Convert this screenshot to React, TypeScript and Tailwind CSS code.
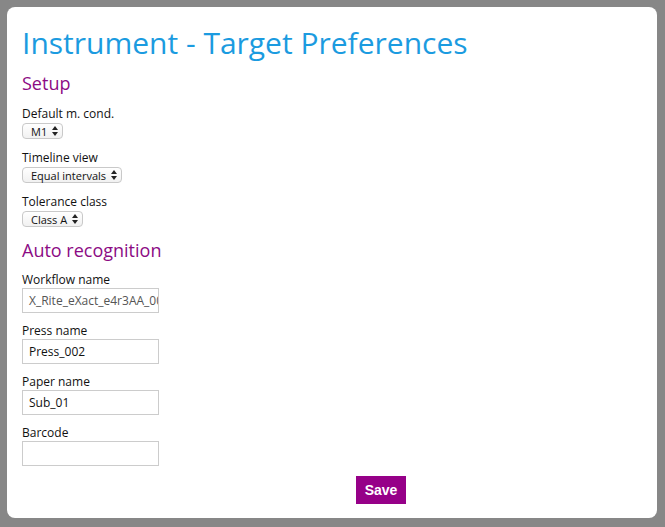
import React from "react";

const font = { fontFamily: '"Open Sans", "Noto Sans", sans-serif' };

function Arrows() {
  return (
    <svg width="6" height="10" viewBox="0 0 6 10" className="ml-[5px]">
      <path d="M0 4 L3 0 L6 4 Z" fill="#222" />
      <path d="M0 6 L3 10 L6 6 Z" fill="#222" />
    </svg>
  );
}

function FakeSelect({ value }: { value: string }) {
  return (
    <div className="mt-[1px] inline-flex h-[16px] items-center rounded-[4px] border border-[#c9c9c9] bg-gradient-to-b from-white to-[#f1f1f1] pl-[8px] pr-[4px] text-[11px] leading-none text-[#111]">
      {value}
      <Arrows />
    </div>
  );
}

function SelectField({ label, value }: { label: string; value: string }) {
  return (
    <div className="mb-[11px] flex flex-col items-start">
      <label className="text-[12px] leading-[16px] text-[#111]">{label}</label>
      <FakeSelect value={value} />
    </div>
  );
}

function TextField({ label, value, muted }: { label: string; value: string; muted?: boolean }) {
  return (
    <div className="mb-[10px] flex flex-col">
      <label className="text-[12px] leading-[16px] text-[#111]">{label}</label>
      <div
        className={`flex h-[25px] w-[137px] items-center overflow-hidden whitespace-nowrap border border-[#cccccc] bg-white pl-[6px] text-[12px] ${
          muted ? "text-[#555]" : "text-[#111]"
        }`}
      >
        {value}
      </div>
    </div>
  );
}

export default function App() {
  return (
    <div className="min-h-[527px] w-[665px] bg-[#878787] p-[7px]" style={font}>
      <div className="h-[511px] w-[650px] rounded-[8px] bg-white px-[15px] pt-[16px]">
        <h1 className="text-[30px] leading-[40px] text-[#1b9be0]">Instrument - Target Preferences</h1>
        <h2 className="mt-[8px] text-[18px] leading-[24px] text-[#8c0a84]">Setup</h2>
        <div className="mt-[11px]">
          <SelectField label="Default m. cond." value="M1" />
          <SelectField label="Timeline view" value="Equal intervals" />
          <SelectField label="Tolerance class" value="Class A" />
        </div>
        <h2 className="text-[18px] leading-[24px] text-[#8c0a84]">Auto recognition</h2>
        <div className="mt-[10px]">
          <TextField label="Workflow name" value="X_Rite_eXact_e4r3AA_0001" muted />
          <TextField label="Press name" value="Press_002" />
          <TextField label="Paper name" value="Sub_01" />
          <TextField label="Barcode" value="" />
        </div>
        <div className="pl-[334px]">
          <button
            className="h-[28px] w-[50px] bg-[#960088] text-[14px] font-bold text-white"
            style={{ fontFamily: '"Liberation Sans", Arial, sans-serif' }}
          >
            Save
          </button>
        </div>
      </div>
    </div>
  );
}
